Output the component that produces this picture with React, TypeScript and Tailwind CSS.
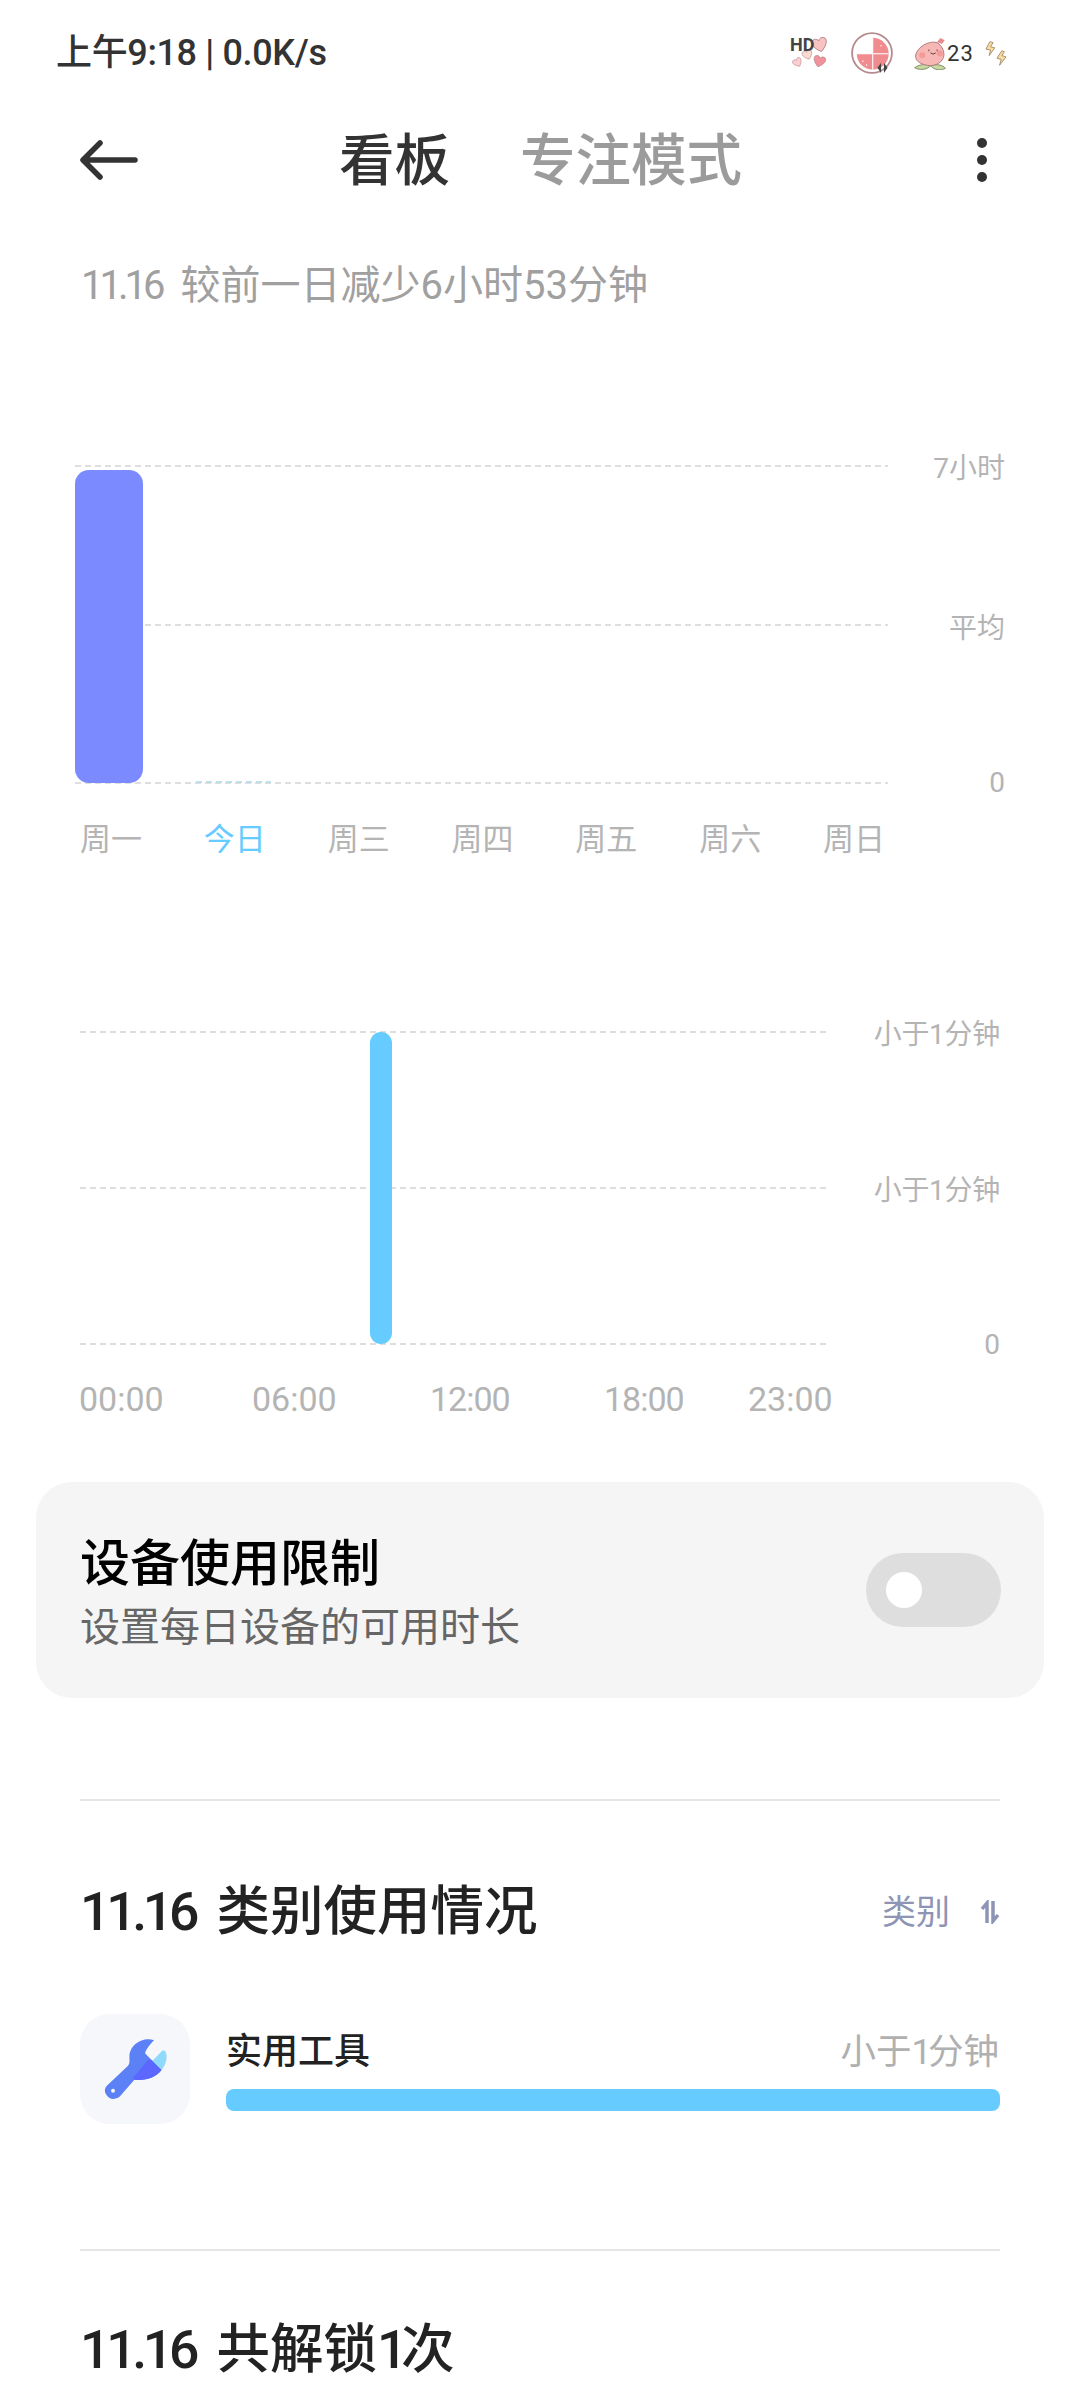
const Dash = ({ className = "" }: { className?: string }) => (
  <div
    className={
      "h-[2px] bg-[repeating-linear-gradient(90deg,#dedede_0,#dedede_6px,transparent_6px,transparent_10px)] " +
      className
    }
  ></div>
);

const heart = "M0 10C-14 0-14-10-6-11c3 0 5 2 6 4 1-2 3-4 6-4 8 1 8 11-6 21z";

const Hearts = () => (
  <svg width="40" height="33" viewBox="150 45 120 100" className="absolute left-0 top-0" stroke="#b98486" strokeWidth="1.4">
    <path d={heart} transform="translate(240 70) rotate(-15) scale(1.95)" fill="#f9c3c4" />
    <path d={heart} transform="translate(203 100) rotate(-20) scale(1.3)" fill="#fbdcd3" />
    <path d={heart} transform="translate(173 123) rotate(-30) scale(1.2)" fill="#fbcfd0" />
    <path d={heart} transform="translate(238 120) rotate(15) scale(1.55)" fill="#f0939b" />
  </svg>
);

const Battery = () => (
  <svg width="42" height="42" viewBox="337 37 116 116">
    <circle cx="395" cy="95" r="55" fill="#fff" stroke="#b58c8e" strokeWidth="5" />
    <path d="M397 97V53A44 44 0 1 1 353 97Z" fill="#f08c90" />
    <path d="M397 53V141M353 97H441" stroke="#fff" strokeWidth="3" />
    <circle cx="420" cy="75" r="2" fill="#fff" />
    <circle cx="370" cy="118" r="2" fill="#fff" />
    <circle cx="380" cy="128" r="2" fill="#fff" />
    <path d="M420 122v28l-10-14zM428 122l10 14-10 14z" fill="#444" />
  </svg>
);

const Peach = () => (
  <svg width="33" height="33" viewBox="520 45 100 100">
    <path d="M522 138C540 125 560 128 570 132 560 145 535 146 522 138zM570 132C585 125 610 130 615 140 600 148 580 145 570 132z" fill="#c7d8a4" stroke="#7f8f60" strokeWidth="3" />
    <path d="M590 62C565 55 530 75 525 100 522 120 545 130 570 132 595 130 615 115 610 90 607 78 600 68 590 62z" fill="#f6b7b5" stroke="#b07a7a" strokeWidth="3" />
    <path d="M590 60L600 48 613 55 605 66z" fill="#e98b8b" />
    <circle cx="545" cy="100" r="9" fill="#f49a9a" />
    <circle cx="598" cy="95" r="9" fill="#f49a9a" />
    <path d="M565 83v5M590 83v5M570 93q8 8 16 0" stroke="#5c4040" strokeWidth="3" fill="none" />
  </svg>
);

const Bolts = () => (
  <svg width="22" height="26" viewBox="735 52 68 80" fill="#f8dca0" stroke="#a89070" strokeWidth="3">
    <path d="M750 57L738 80 752 83 748 100 765 76 752 73 760 60Z" />
    <path d="M787 85L772 108 785 112 780 130 800 104 787 100 795 88Z" />
  </svg>
);

const Wrench = () => (
  <svg width="66" height="64" viewBox="100 80 200 195" className="ml-[2px]">
    <path d="M255 90C225 78 180 100 180 140 180 155 182 160 175 168L112 228C100 240 105 255 118 265 130 272 145 268 152 260L195 210C225 215 260 205 278 180L250 152 228 130C228 122 240 105 255 90Z" fill="#5c80f6" />
    <path d="M190 206L238 148 250 152 278 180C260 205 225 215 195 210Z" fill="#5b67ff" />
    <path d="M250 152L280 122C286 118 292 125 293 135 295 150 288 168 278 180Z" fill="#8fd9fb" />
    <circle cx="130" cy="244" r="6" fill="#f5f7fa" />
  </svg>
);

const ChartRow = ({ label, dash, size }: { label: string; dash: string; size: string }) => (
  <div className="flex items-center justify-between h-0">
    <Dash className={dash} />
    <span className={"text-[#b4b4b4] " + size}>{label}</span>
  </div>
);

const App = () => {
  const days = ["周一", "今日", "周三", "周四", "周五", "周六", "周日"];
  return (
    <main
      className="w-[1080px] h-[2400px] overflow-hidden bg-white text-[#222]"
      style={{ fontFamily: 'Roboto, "Noto Sans CJK SC", sans-serif' }}
    >
      {/* status bar */}
      <section className="flex items-center justify-between h-[106px] pl-[56px] pr-[73px]">
        <span className="text-[36px] font-medium text-[#333] tracking-[-0.01em]">上午9:18 | 0.0K/s</span>
        <div className="flex items-center">
          <div className="relative w-[40px] h-[33px]">
            <Hearts />
            <span className="absolute left-0 top-[-6px] text-[18px] font-bold text-[#444]">HD</span>
          </div>
          <div className="ml-[21px]">
            <Battery />
          </div>
          <div className="ml-[21px]">
            <Peach />
          </div>
          <span className="text-[22px] text-[#333] tracking-[0.05em] w-[26px]">23</span>
          <div className="ml-[12px]">
            <Bolts />
          </div>
        </div>
      </section>

      {/* title bar */}
      <header className="flex items-center h-[108px] pl-[80px] pr-[93px]">
        <svg width="58" height="42" viewBox="0 0 58 42" fill="none" stroke="#333" strokeWidth="5.5" strokeLinecap="round" strokeLinejoin="round">
          <path d="M55 21H4M20 4L3 21l17 17" />
        </svg>
        <div className="flex ml-[201px] gap-[70px] text-[55.5px] font-medium leading-none mt-[4px]">
          <span className="text-[#333]">看板</span>
          <span className="text-[#9b9b9b]">专注模式</span>
        </div>
        <div className="ml-auto flex flex-col gap-[7px]">
          <div className="w-[10px] h-[10px] rounded-full bg-[#333]"></div>
          <div className="w-[10px] h-[10px] rounded-full bg-[#333]"></div>
          <div className="w-[10px] h-[10px] rounded-full bg-[#333]"></div>
        </div>
      </header>

      <p className="pl-[81px] pt-[45px] text-[40px] leading-[54px] text-[#a0a0a0]">
        <span className="tracking-[-0.1em]">11.1</span>6<span className="ml-[15px]">较前一日减少6小时53分钟</span>
      </p>

      {/* week chart */}
      <section className="relative mt-[153px] ml-[75px] w-[930px] h-[317px] flex flex-col justify-between">
        <ChartRow label="7小时" dash="w-[813px]" size="text-[28px] translate-y-[3px]" />
        <ChartRow label="平均" dash="w-[743px] ml-[70px]" size="text-[28px] translate-y-[4px]" />
        <ChartRow label="0" dash="w-[813px]" size="text-[28px]" />
        <div className="absolute left-[121px] bottom-0 w-[75px] h-[2px] bg-[repeating-linear-gradient(90deg,#bfe0ea_0,#bfe0ea_6px,transparent_6px,transparent_10px)]"></div>
        <div className="absolute left-0 top-[4px] w-[68px] h-[313px] rounded-[14px] bg-[#7b8aff]"></div>
      </section>
      <div className="flex ml-[77px] w-[811px] mt-[35px] justify-between">
        {days.map((d) => (
          <span key={d} className={"w-[68px] text-center text-[31px] leading-[44px] " + (d === "今日" ? "text-[#66ccff]" : "text-[#b4b4b4]")}>
            {d}
          </span>
        ))}
      </div>

      {/* day chart */}
      <section className="relative mt-[170px] ml-[80px] w-[920px] h-[312px] flex flex-col justify-between">
        <ChartRow label="小于1分钟" dash="w-[746px]" size="text-[28px] tracking-[-0.01em] translate-y-[3px]" />
        <ChartRow label="小于1分钟" dash="w-[746px]" size="text-[28px] tracking-[-0.01em] translate-y-[3px]" />
        <ChartRow label="0" dash="w-[746px]" size="text-[28px] translate-y-[1px]" />
        <div className="absolute left-[290px] top-0 w-[22px] h-[312px] rounded-full bg-[#66ccff]"></div>
      </section>
      <div className="grid grid-cols-[173px_178px_174px_144px_auto] ml-[79px] w-[760px] mt-[33px] text-[34px] leading-[44px] text-[#b4b4b4]">
        <span>00:00</span>
        <span>06:00</span>
        <span className="tracking-[-0.03em]">12:00</span>
        <span className="tracking-[-0.03em]">18:00</span>
        <span>23:00</span>
      </div>

      {/* limit card */}
      <section className="flex items-center justify-between mt-[61px] mx-[36px] h-[216px] rounded-[36px] bg-[#f5f5f5] pl-[44px] pr-[43px]">
        <div className="flex flex-col gap-[3px] mt-[6px]">
          <span className="text-[50px] leading-[66px] font-medium text-black">设备使用限制</span>
          <span className="text-[40px] leading-[56px] text-[#666]">设置每日设备的可用时长</span>
        </div>
        <div className="flex items-center w-[135px] h-[74px] rounded-full bg-[#dedede] pl-[20px]">
          <div className="w-[36px] h-[36px] rounded-full bg-white"></div>
        </div>
      </section>

      <div className="h-[2px] bg-[#e5e5e5] mx-[80px] mt-[101px]"></div>

      {/* category usage */}
      <section className="flex items-center justify-between mx-[80px] mt-[75px] h-[72px]">
        <h2 className="text-[53.5px] font-medium text-[#222] leading-none">
          <span className="tracking-[-0.08em]">11.1</span>6<span className="ml-[17px]">类别使用情况</span>
        </h2>
        <div className="flex items-center gap-[30px] text-[#8e94b4]">
          <span className="text-[34px]">类别</span>
          <svg width="20" height="24" viewBox="0 0 20 24" fill="none" stroke="#8e94b4" strokeWidth="3.5">
            <path d="M7 23V3L2 9M13 1v20l5-6" />
          </svg>
        </div>
      </section>
      <section className="flex items-center mx-[80px] mt-[66px] gap-[36px]">
        <div className="flex items-center justify-center w-[110px] h-[110px] rounded-[30px] bg-[#f5f7fa]">
          <Wrench />
        </div>
        <div className="flex flex-col flex-1">
          <div className="flex items-center justify-between h-[50px]">
            <span className="text-[36px] font-medium text-[#222]">实用工具</span>
            <span className="text-[35.5px] text-[#b0b0b0] pr-[1px] mt-[2px]">
              小于<span className="tracking-[-0.1em]">1</span>分钟
            </span>
          </div>
          <div className="h-[22px] mt-[12px] rounded-[8px] bg-[#66ccff]"></div>
        </div>
      </section>

      <div className="h-[2px] bg-[#e5e5e5] mx-[80px] mt-[125px]"></div>

      <h2 className="mx-[80px] mt-[72px] text-[53.5px] font-medium text-[#222] leading-[54px]">
        <span className="tracking-[-0.08em]">11.1</span>6<span className="ml-[17px]">共解锁<span className="tracking-[-0.12em]">1</span>次</span>
      </h2>
    </main>
  );
};

export default App;
